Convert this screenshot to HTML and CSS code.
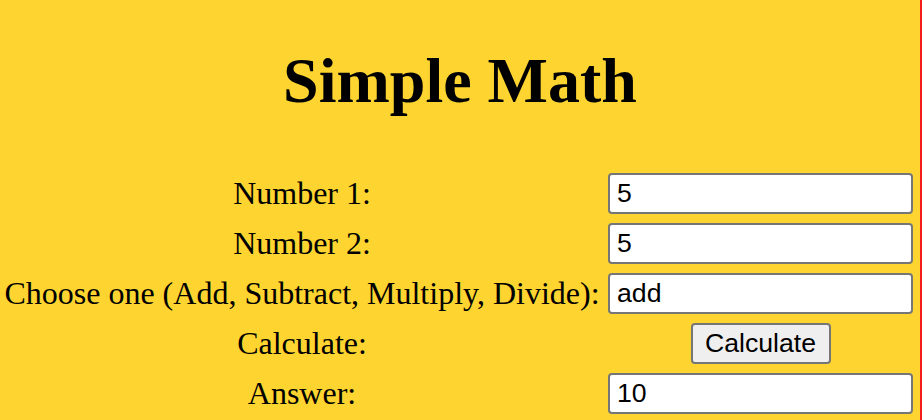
FILE: index.html
```html
<!DOCTYPE html>
<html>
<head>
<meta charset="utf-8">
<link rel="stylesheet" href="styles.css">
</head>
<body>
<div class="page">
  <h1 class="title">Simple Math</h1>
  <div class="form">
    <div class="label">Number 1:</div>
    <div class="field"><input class="box" type="text" value="5"></div>
    <div class="label">Number 2:</div>
    <div class="field"><input class="box" type="text" value="5"></div>
    <div class="label">Choose one (Add, Subtract, Multiply, Divide):</div>
    <div class="field"><input class="box" type="text" value="add"></div>
    <div class="label">Calculate:</div>
    <div class="field"><button class="btn" type="button">Calculate</button></div>
    <div class="label">Answer:</div>
    <div class="field"><input class="box" type="text" value="10"></div>
  </div>
</div>
</body>
</html>
```
FILE: styles.css
```css
html, body {
  margin: 0;
  padding: 0;
}
body {
  background: #f41c1c;
  height: 420px;
  overflow: hidden;
}
.page {
  width: 920px;
  height: 420px;
  background: #fed530;
  font-family: "Liberation Serif", "Times New Roman", serif;
  color: #000;
}
.title {
  margin: 0;
  padding-top: 45px;
  font-size: 64px;
  line-height: 72px;
  font-weight: bold;
  text-align: center;
}
.form {
  margin-top: 56px;
  padding-left: 2px;
  display: grid;
  grid-template-columns: 600px 305px;
  column-gap: 6px;
  grid-auto-rows: 41px;
  row-gap: 9px;
  align-items: center;
}
.label {
  font-size: 32px;
  text-align: center;
  line-height: 41px;
  white-space: nowrap;
}
.field {
  display: flex;
  justify-content: center;
  height: 41px;
}
.box {
  box-sizing: border-box;
  width: 305px;
  height: 41px;
  margin: 0;
  border: 2px solid #767676;
  border-radius: 4px;
  padding: 0 7px;
  background: #fff;
  font-family: "Liberation Sans", Arial, sans-serif;
  font-size: 26.67px;
  color: #000;
}
.btn {
  box-sizing: border-box;
  width: 140px;
  height: 41px;
  margin: 0;
  border: 2px solid #767676;
  border-radius: 4px;
  padding: 0;
  background: #efefef;
  font-family: "Liberation Sans", Arial, sans-serif;
  font-size: 26.67px;
  color: #000;
}
```
